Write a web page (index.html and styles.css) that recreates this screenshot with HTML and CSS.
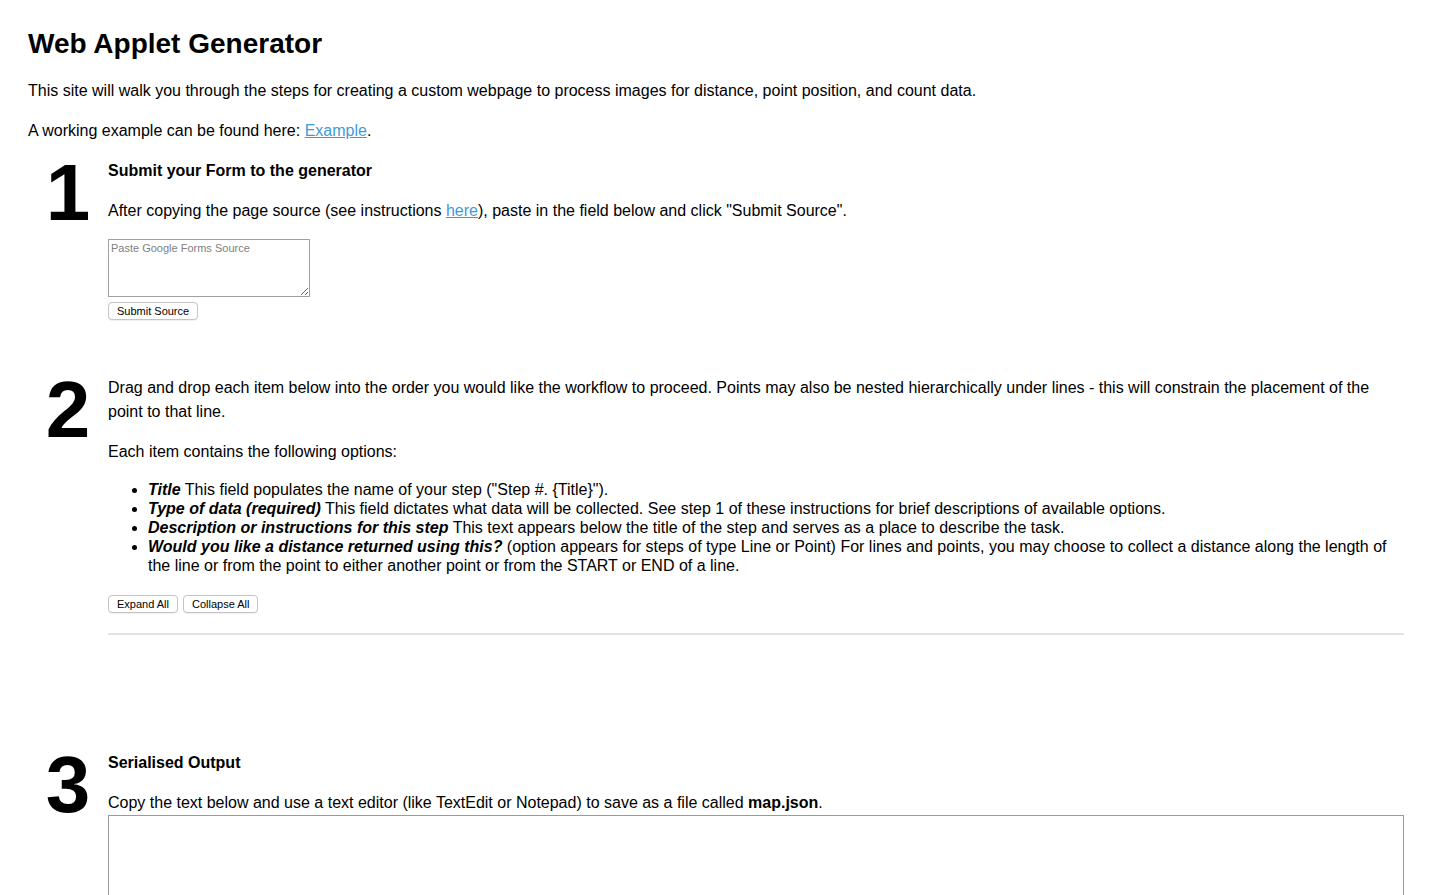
FILE: index.html
```
<!DOCTYPE html>
<html>
<head>
<meta charset="utf-8">
<title>Web Applet Generator</title>
<link rel="stylesheet" href="styles.css">
</head>
<body>
<h1 class="title">Web Applet Generator</h1>
<p class="text">This site will walk you through the steps for creating a custom webpage to process images for distance, point position, and count data.</p>
<p class="text">A working example can be found here: <a class="link" href="#">Example</a>.</p>

<section class="step step-one">
  <div class="num">1</div>
  <div class="content">
    <p class="text heading">Submit your Form to the generator</p>
    <p class="text">After copying the page source (see instructions <a class="link" href="#">here</a>), paste in the field below and click "Submit Source".</p>
    <textarea class="source" placeholder="Paste Google Forms Source"></textarea>
    <button class="btn">Submit Source</button>
  </div>
</section>

<section class="step step-two">
  <div class="num">2</div>
  <div class="content">
    <p class="text">Drag and drop each item below into the order you would like the workflow to proceed. Points may also be nested hierarchically under lines - this will constrain the placement of the point to that line.</p>
    <p class="text">Each item contains the following options:</p>
    <ul class="options">
      <li><b><i>Title</i></b> This field populates the name of your step ("Step #. {Title}").</li>
      <li><b><i>Type of data (required)</i></b> This field dictates what data will be collected. See step 1 of these instructions for brief descriptions of available options.</li>
      <li><b><i>Description or instructions for this step</i></b> This text appears below the title of the step and serves as a place to describe the task.</li>
      <li><b><i>Would you like a distance returned using this?</i></b> (option appears for steps of type Line or Point) For lines and points, you may choose to collect a distance along the length of the line or from the point to either another point or from the START or END of a line.</li>
    </ul>
    <div class="btn-row">
      <button class="btn">Expand All</button>
      <button class="btn">Collapse All</button>
    </div>
    <hr class="rule">
  </div>
</section>

<section class="step step-three">
  <div class="num">3</div>
  <div class="content">
    <p class="text heading">Serialised Output</p>
    <p class="text tight">Copy the text below and use a text editor (like TextEdit or Notepad) to save as a file called <b>map.json</b>.</p>
    <textarea class="output"></textarea>
  </div>
</section>
</body>
</html>
```
FILE: styles.css
```
html, body {
  margin: 0;
  padding: 0;
  background: #ffffff;
}
body {
  padding: 0 28px;
  font-family: "Liberation Sans", Arial, Helvetica, sans-serif;
  color: #000;
}
.title {
  font-size: 28px;
  font-weight: bold;
  line-height: 34px;
  margin: 27px 0 18px 0;
}
.text {
  font-size: 16px;
  line-height: 24px;
  margin: 0 0 16px 0;
}
.heading {
  font-weight: bold;
}
.tight {
  margin-bottom: 0;
}
.link {
  color: #3f9bd6;
  text-decoration: underline;
}
.step {
  display: flex;
  align-items: flex-start;
}
.num {
  width: 80px;
  flex: none;
  font-size: 80px;
  font-weight: bold;
  line-height: 80px;
  text-align: center;
  margin-top: -6px;
}
.content {
  flex: 1;
  min-width: 0;
}
.source {
  display: block;
  box-sizing: border-box;
  width: 202px;
  height: 58px;
  margin: 0;
  padding: 2px 2px;
  border: 1px solid #a0a0a0;
  font-family: "Liberation Sans", Arial, sans-serif;
  font-size: 11px;
  resize: both;
}
.source::placeholder {
  color: #808080;
}
.btn {
  display: inline-block;
  box-sizing: border-box;
  height: 18px;
  padding: 0 8px;
  margin: 0;
  font-family: "Liberation Sans", Arial, sans-serif;
  font-size: 11px;
  line-height: 16px;
  color: #000;
  background: #ffffff;
  border: 1px solid #c4c4c4;
  border-radius: 4px;
  box-shadow: 0 1px 0 rgba(0,0,0,0.06);
}
.step-one .btn {
  margin-top: 5px;
}
.step-two {
  margin-top: 56px;
}
.options {
  margin: 0;
  padding-left: 40px;
  font-size: 16px;
  line-height: 19px;
}
.btn-row {
  display: flex;
  gap: 5px;
  margin-top: 20px;
}
.rule {
  margin: 20px 0 0 0;
  border: none;
  height: 2px;
  background: #e3e3e3;
}
.step-three {
  margin-top: 116px;
}
.output {
  display: block;
  box-sizing: border-box;
  width: 100%;
  height: 120px;
  margin: 0;
  border: 1px solid #9a9a9a;
  resize: both;
}
```
